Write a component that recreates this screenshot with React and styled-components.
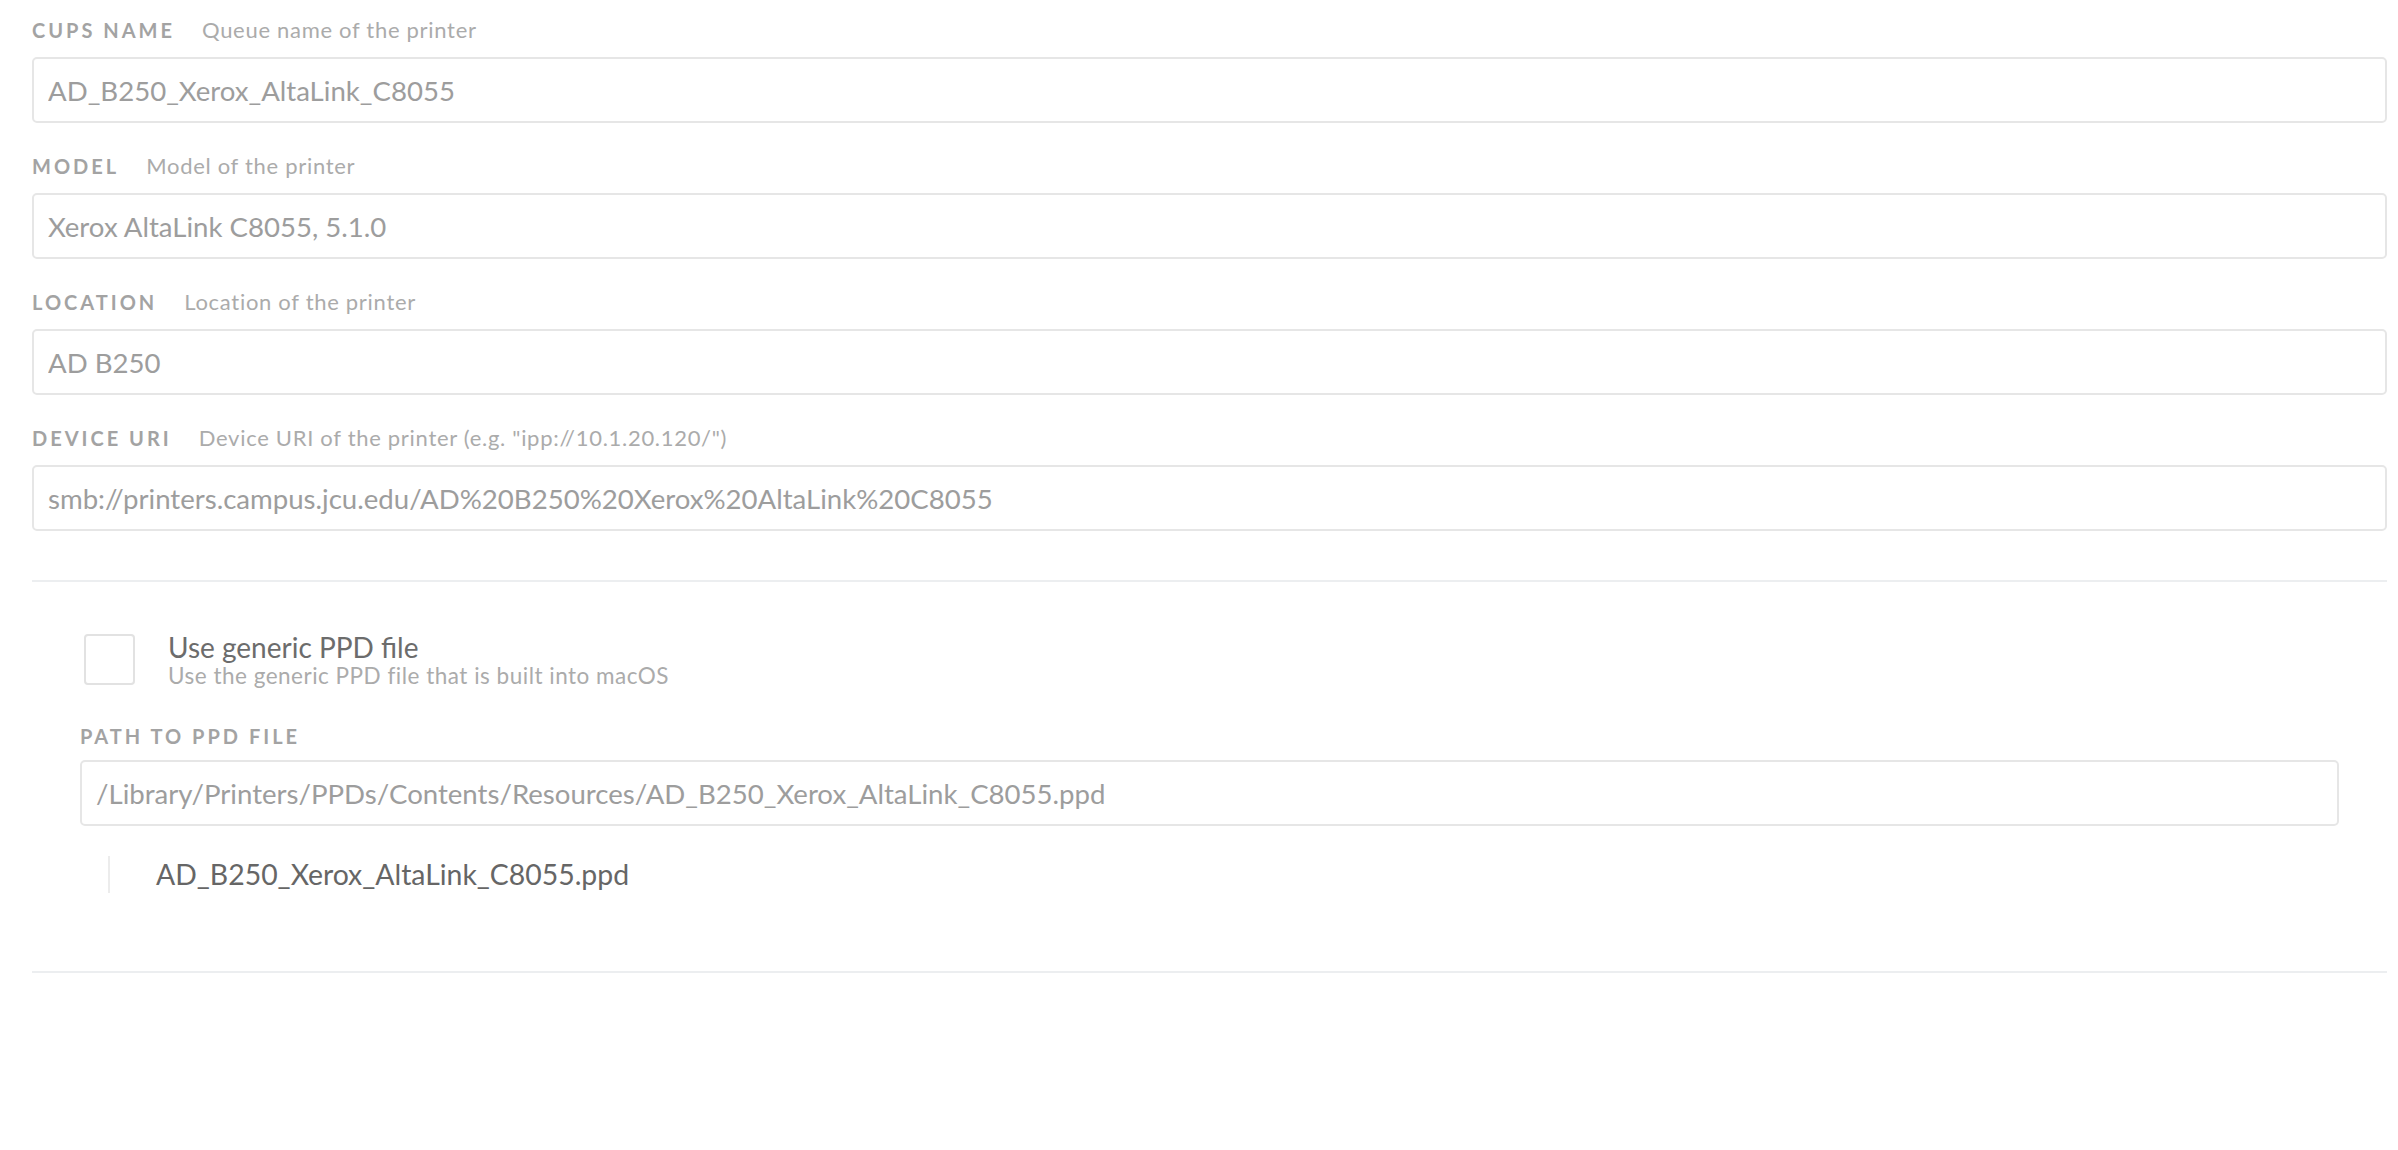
import React from "react";
import styled, { createGlobalStyle } from "styled-components";

const Global = createGlobalStyle`
  html, body { margin: 0; padding: 0; background: #ffffff; }
  body { font-family: Lato, "Open Sans", "Liberation Sans", sans-serif; }
  * { box-sizing: border-box; }
`;

const Page = styled.div`
  padding: 18px 11px 40px 32px;
  display: flex;
  flex-direction: column;
`;

const Field = styled.div`
  display: flex;
  flex-direction: column;
  margin-bottom: ${(p) => p.$mb ?? 31}px;
`;

const LabelRow = styled.div`
  display: flex;
  align-items: baseline;
  gap: 27px;
  height: 24px;
  line-height: 24px;
  margin-bottom: ${(p) => p.$gap ?? 15}px;
`;

const Label = styled.span`
  font-size: 20px;
  font-weight: 700;
  letter-spacing: 3px;
  color: #a3a3a3;
  text-transform: uppercase;
`;

const Desc = styled.span`
  font-size: 22px;
  letter-spacing: 0.7px;
  color: #ababab;
`;

const Input = styled.input`
  height: 66px;
  width: 100%;
  border: 2px solid #e6e6e6;
  border-radius: 5px;
  padding: 0 14px;
  font-family: inherit;
  font-size: 27.6px;
  color: #9d9d9d;
  background: #fff;
  outline: none;
`;

const Divider = styled.hr`
  border: none;
  height: 2px;
  background: #eceef0;
  margin: 0;
  width: 100%;
`;

const Section = styled.div`
  padding: 52px 48px 0 48px;
  display: flex;
  flex-direction: column;
`;

const CheckRow = styled.label`
  display: flex;
  align-items: flex-start;
  gap: 33px;
  padding-left: 4px;
  margin-bottom: 32px;
`;

const Box = styled.span`
  width: 51px;
  height: 51px;
  border: 2px solid #e2e2e2;
  border-radius: 4px;
  flex: none;
`;

const CheckText = styled.div`
  display: flex;
  flex-direction: column;
`;

const CheckTitle = styled.span`
  font-size: 28px;
  line-height: 26px;
  color: #6c6c6c;
`;

const CheckSub = styled.span`
  font-size: 22.5px;
  letter-spacing: 0.5px;
  line-height: 32px;
  color: #ababab;
`;

const FileList = styled.div`
  display: flex;
  flex-direction: column;
  padding: 30px 0 78px 28px;
`;

const FileItem = styled.div`
  border-left: 2px solid #ececec;
  padding-left: 46px;
  height: 37px;
  line-height: 37px;
  font-size: 28.4px;
  color: #666666;
`;

export default function App() {
  const fields = [
    ["CUPS Name", "Queue name of the printer", "AD_B250_Xerox_AltaLink_C8055"],
    ["Model", "Model of the printer", "Xerox AltaLink C8055, 5.1.0"],
    ["Location", "Location of the printer", "AD B250"],
    [
      "Device URI",
      'Device URI of the printer (e.g. "ipp://10.1.20.120/")',
      "smb://printers.campus.jcu.edu/AD%20B250%20Xerox%20AltaLink%20C8055",
    ],
  ];
  return (
    <>
      <Global />
      <Page>
        {fields.map(([l, d, v], i) => (
          <Field key={l} $mb={i === fields.length - 1 ? 49 : 31}>
            <LabelRow>
              <Label>{l}</Label>
              <Desc>{d}</Desc>
            </LabelRow>
            <Input readOnly value={v} />
          </Field>
        ))}
        <Divider />
        <Section>
          <CheckRow>
            <Box />
            <CheckText>
              <CheckTitle>Use generic PPD file</CheckTitle>
              <CheckSub>Use the generic PPD file that is built into macOS</CheckSub>
            </CheckText>
          </CheckRow>
          <Field $mb={0}>
            <LabelRow $gap={12}>
              <Label>Path to PPD file</Label>
            </LabelRow>
            <Input
              readOnly
              value="/Library/Printers/PPDs/Contents/Resources/AD_B250_Xerox_AltaLink_C8055.ppd"
            />
          </Field>
          <FileList>
            <FileItem>AD_B250_Xerox_AltaLink_C8055.ppd</FileItem>
          </FileList>
        </Section>
        <Divider />
      </Page>
    </>
  );
}
